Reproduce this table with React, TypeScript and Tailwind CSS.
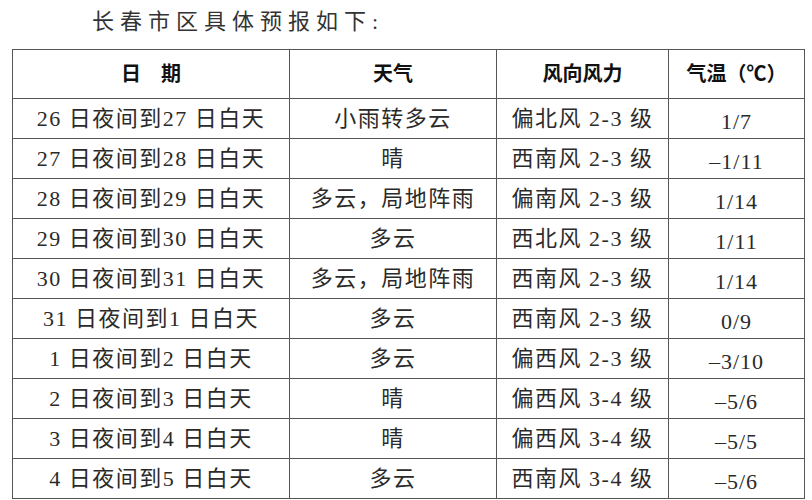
const rows = [
  ["26 日夜间到27 日白天", "小雨转多云", "偏北风 2-3 级", "1/7"],
  ["27 日夜间到28 日白天", "晴", "西南风 2-3 级", "–1/11"],
  ["28 日夜间到29 日白天", "多云，局地阵雨", "偏南风 2-3 级", "1/14"],
  ["29 日夜间到30 日白天", "多云", "西北风 2-3 级", "1/11"],
  ["30 日夜间到31 日白天", "多云，局地阵雨", "西南风 2-3 级", "1/14"],
  ["31 日夜间到1 日白天", "多云", "西南风 2-3 级", "0/9"],
  ["1 日夜间到2 日白天", "多云", "偏西风 2-3 级", "–3/10"],
  ["2 日夜间到3 日白天", "晴", "偏西风 3-4 级", "–5/6"],
  ["3 日夜间到4 日白天", "晴", "偏西风 3-4 级", "–5/5"],
  ["4 日夜间到5 日白天", "多云", "西南风 3-4 级", "–5/6"],
]

const font = { fontFamily: '"Liberation Serif", "Noto Sans CJK SC", serif' }

export default function App() {
  return (
    <div className="w-[812px] h-[500px] bg-white overflow-hidden text-[#2a2a2a]" style={font}>
      <div className="h-[49px] pl-[92px] pt-[8px] text-[22px] leading-[28px] tracking-[6px] text-[#333]">
        长春市区具体预报如下:
      </div>
      <table className="ml-[12px] w-[792px] border-collapse table-fixed">
        <colgroup>
          <col className="w-[277px]" />
          <col className="w-[207px]" />
          <col className="w-[172px]" />
          <col className="w-[136px]" />
        </colgroup>
        <thead>
          <tr className="h-[49px] text-[#111]">
            <th className="border-[1.5px] border-[#555] text-[20px] font-bold">日　期</th>
            <th className="border-[1.5px] border-[#555] text-[20px] font-bold">天气</th>
            <th className="border-[1.5px] border-[#555] text-[20px] font-bold">风向风力</th>
            <th className="border-[1.5px] border-[#555] text-[20px] font-bold">气温（℃）</th>
          </tr>
        </thead>
        <tbody>
          {rows.map((r, i) => (
            <tr key={i} className="h-[40px]">
              <td className="border-[1.5px] border-[#555] text-center text-[22px] tracking-[1.5px] leading-none">{r[0]}</td>
              <td className="border-[1.5px] border-[#555] text-center text-[22px] tracking-[1.5px] leading-none">{r[1]}</td>
              <td className="border-[1.5px] border-[#555] text-center text-[22px] tracking-[1.5px] leading-none">{r[2]}</td>
              <td className="border-[1.5px] border-[#555] text-center text-[22px] tracking-[1px] leading-none pt-[6px]">{r[3]}</td>
            </tr>
          ))}
        </tbody>
      </table>
    </div>
  )
}
